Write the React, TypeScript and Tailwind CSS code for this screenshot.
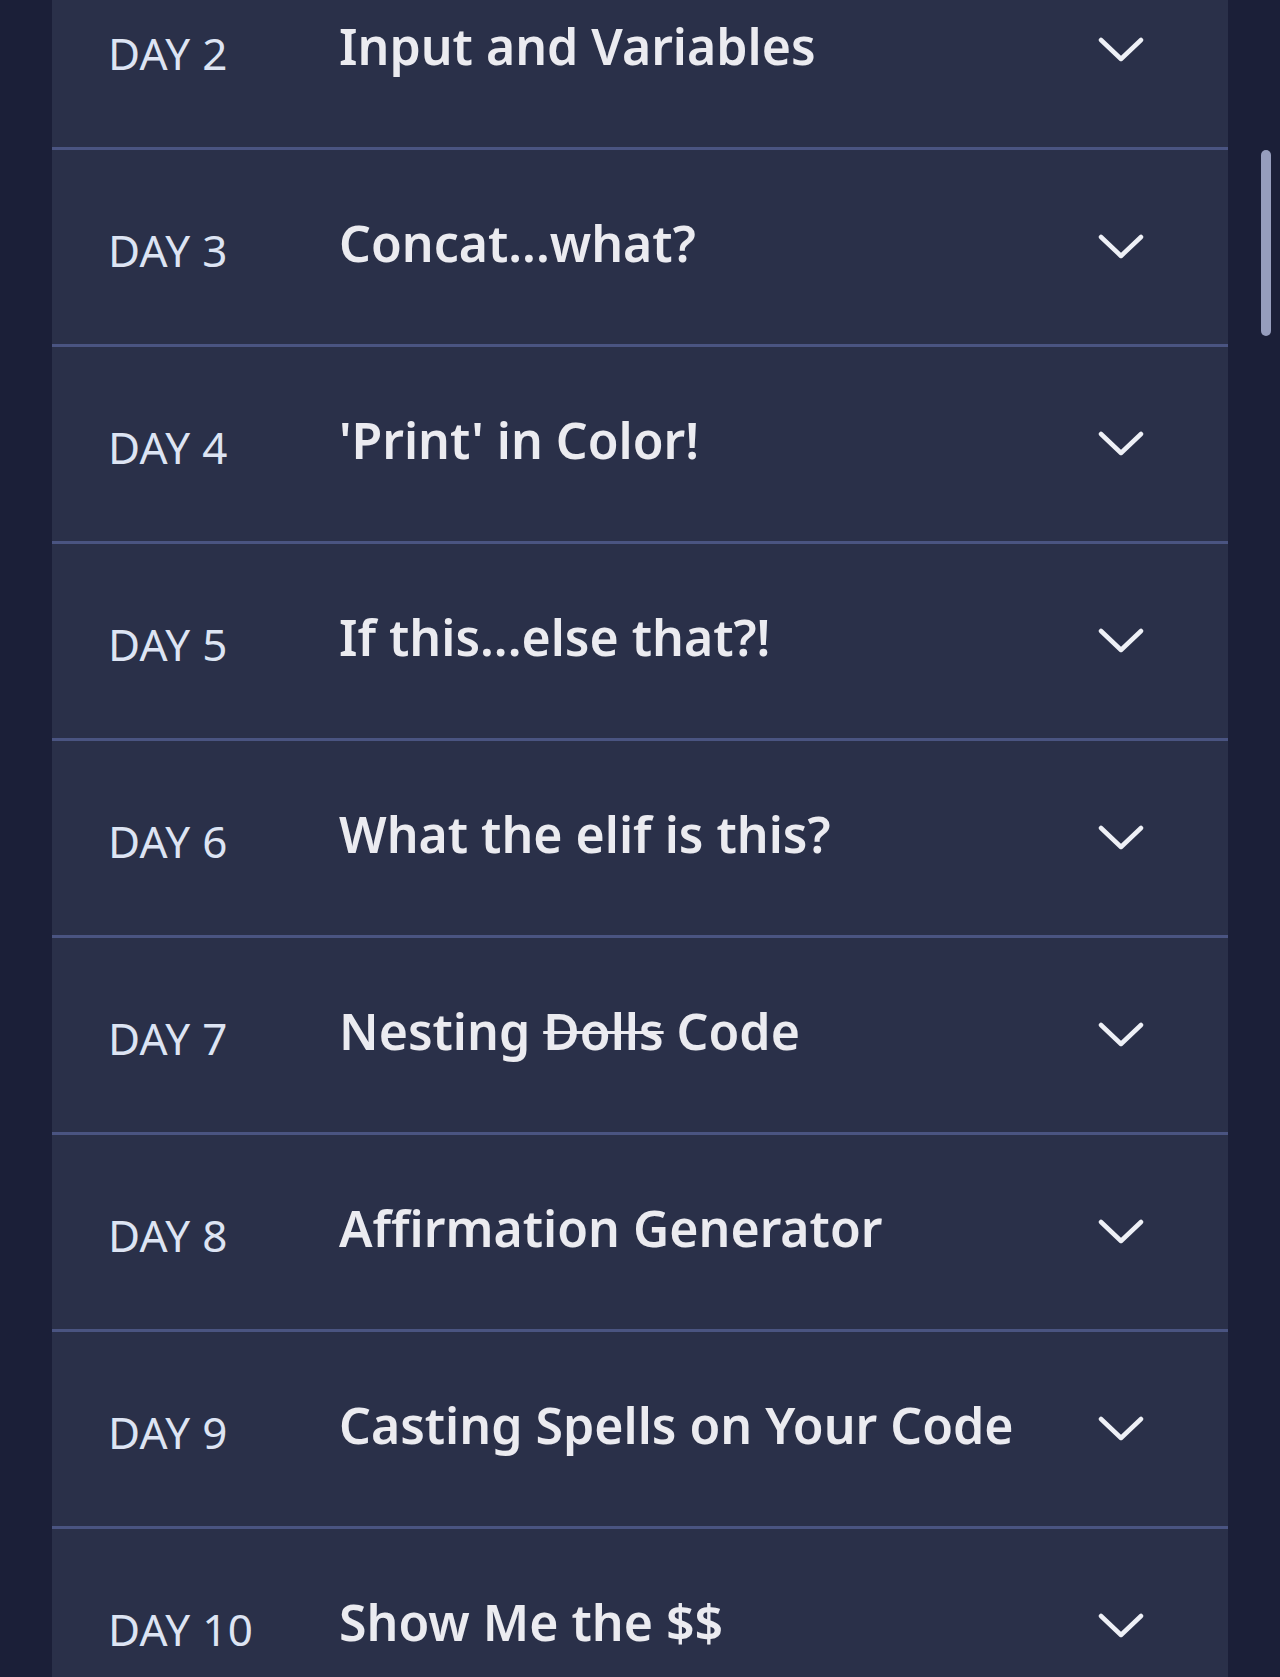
import React from "react";

interface Lesson {
  day: number;
  title: React.ReactNode;
}

const lessons: Lesson[] = [
  { day: 2, title: "Input and Variables" },
  { day: 3, title: "Concat...what?" },
  { day: 4, title: "'Print' in Color!" },
  { day: 5, title: "If this...else that?!" },
  { day: 6, title: "What the elif is this?" },
  {
    day: 7,
    title: (
      <>
        Nesting <span className="line-through decoration-[3px]">Dolls</span> Code
      </>
    ),
  },
  { day: 8, title: "Affirmation Generator" },
  { day: 9, title: "Casting Spells on Your Code" },
  { day: 10, title: "Show Me the $$" },
];

const Chevron = () => (
  <svg width="46" height="26" viewBox="0 0 46 26" fill="none" className="shrink-0">
    <polyline
      points="3,3 23,22 43,3"
      stroke="#eef0f6"
      strokeWidth="4.5"
      strokeLinecap="round"
      strokeLinejoin="round"
    />
  </svg>
);

export default function App() {
  return (
    <div
      className="relative h-[1677px] overflow-hidden bg-[#1b1f38]"
      style={{ fontFamily: "'Noto Sans', 'Open Sans', sans-serif" }}
    >
      <div className="ml-[52px] w-[1176px] -mt-[47px] bg-[#2a3049]">
        {lessons.map((l) => (
          <div
            key={l.day}
            className="flex h-[197px] items-center border-b-[3px] border-[#4a5481] pl-[56px] pr-[84px]"
          >
            <div className="mt-[6px] w-[231px] shrink-0 text-[44px] font-normal tracking-[0.3px] text-[#dde4f3]">
              DAY {l.day}
            </div>
            <div className="mb-[8px] flex-1 text-[50px] font-semibold text-[#ebebf0]">
              {l.title}
            </div>
            <Chevron />
          </div>
        ))}
      </div>

      {/* scrollbar thumb */}
      <div className="absolute right-[9px] top-[150px] h-[186px] w-[10px] rounded-full bg-[#969dbd]" />
    </div>
  );
}
